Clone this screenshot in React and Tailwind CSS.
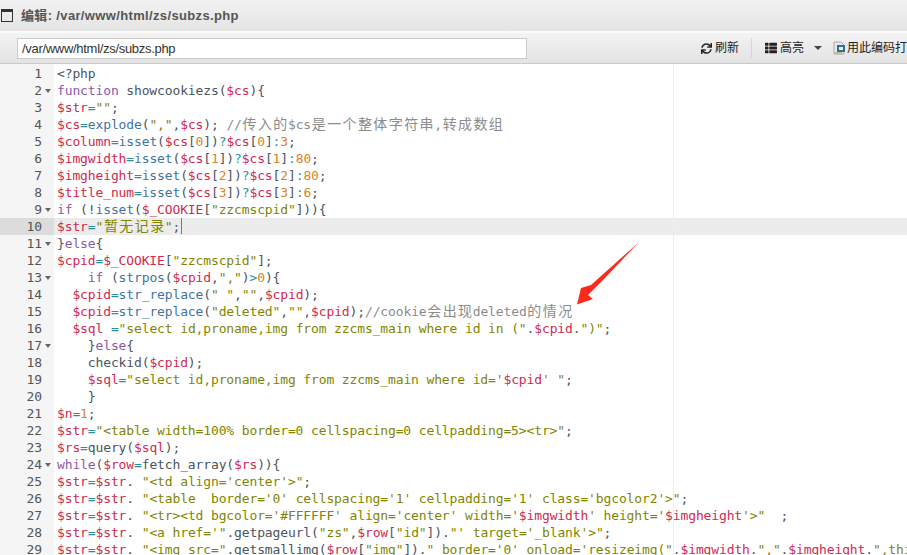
import React from 'react';
import { FaSync, FaThList } from 'react-icons/fa';

const code = [
  '<?php',
  'function showcookiezs($cs){',
  '$str="";',
  '$cs=explode(",",$cs); //传入的$cs是一个整体字符串,转成数组',
  '$column=isset($cs[0])?$cs[0]:3;',
  '$imgwidth=isset($cs[1])?$cs[1]:80;',
  '$imgheight=isset($cs[2])?$cs[2]:80;',
  '$title_num=isset($cs[3])?$cs[3]:6;',
  'if (!isset($_COOKIE["zzcmscpid"])){',
  '$str="暂无记录";',
  '}else{',
  '$cpid=$_COOKIE["zzcmscpid"];',
  '    if (strpos($cpid,",")>0){',
  '  $cpid=str_replace(" ","",$cpid);',
  '  $cpid=str_replace("deleted","",$cpid);//cookie会出现deleted的情况',
  '  $sql ="select id,proname,img from zzcms_main where id in (".$cpid.")";',
  '    }else{',
  '    checkid($cpid);',
  '    $sql="select id,proname,img from zzcms_main where id=\'$cpid\' ";',
  '    }',
  '$n=1;',
  '$str="<table width=100% border=0 cellspacing=0 cellpadding=5><tr>";',
  '$rs=query($sql);',
  'while($row=fetch_array($rs)){',
  '$str=$str. "<td align=\'center\'>";',
  '$str=$str. "<table  border=\'0\' cellspacing=\'1\' cellpadding=\'1\' class=\'bgcolor2\'>";',
  '$str=$str. "<tr><td bgcolor=\'#FFFFFF\' align=\'center\' width=\'$imgwidth\' height=\'$imgheight\'>"  ;',
  '$str=$str. "<a href=\'".getpageurl("zs",$row["id"])."\' target=\'_blank\'>";',
  '$str=$str. "<img src=".getsmallimg($row["img"])." border=\'0\' onload=\'resizeimg(".$imgwidth.",".$imgheight.",this)\'>";',
];

const folds = [2, 9, 11, 13, 17, 24];

const colors = {
  plain: 'text-[#4a5560]',
  variable: 'text-[#cf2a4f]',
  keyword: 'text-[#8a5aa8]',
  builtin: 'text-[#3f74a3]',
  string: 'text-[#7f8500]',
  number: 'text-[#d9822b]',
  operator: 'text-[#2f8f9f]',
  comment: 'text-[#8c8c8c]',
};

const tokenRe = /(\/\/.*$)|("[^"]*")|(\$\w+)|\b(function|if|else|while)\b|\b(explode|isset|str_replace|strpos)\b|(\b\d+\b)|([=><?:]+)/g;

// cjk chars take two columns in the editor
const Chars = ({ text, color }) => {
  const parts = text.split(/([\u4e00-\u9fff])/).filter(Boolean);
  return parts.map((part, i) =>
    /[\u4e00-\u9fff]/.test(part) ? (
      <span key={i} className={`inline-block w-[15.4px] text-center text-[14px] ${color}`}>{part}</span>
    ) : (
      <span key={i} className={color}>{part}</span>
    )
  );
};

const StringToken = ({ text }) =>
  text.split(/(\$\w+)/).map((part, i) =>
    part.startsWith('$') ? (
      <span key={i} className={colors.variable}>{part}</span>
    ) : (
      <Chars key={i} text={part} color={colors.string} />
    )
  );

const highlight = (line) => {
  if (line === '<?php') return <span className={colors.plain}>{line}</span>;
  const out = [];
  let last = 0;
  for (const m of line.matchAll(tokenRe)) {
    if (m.index > last) out.push(<span key={last} className={colors.plain}>{line.slice(last, m.index)}</span>);
    const k = m.index;
    if (m[1]) out.push(<Chars key={k} text={m[1]} color={colors.comment} />);
    else if (m[2]) out.push(<StringToken key={k} text={m[2]} />);
    else if (m[3]) out.push(<span key={k} className={colors.variable}>{m[3]}</span>);
    else if (m[4]) out.push(<span key={k} className={colors.keyword}>{m[4]}</span>);
    else if (m[5]) out.push(<span key={k} className={colors.builtin}>{m[5]}</span>);
    else if (m[6]) out.push(<span key={k} className={colors.number}>{m[6]}</span>);
    else out.push(<span key={k} className={colors.operator}>{m[7]}</span>);
    last = m.index + m[0].length;
  }
  if (last < line.length) out.push(<span key={last} className={colors.plain}>{line.slice(last)}</span>);
  return out;
};

const CodeRow = ({ line, n }) => {
  const active = n === 10;
  return (
    <div className={`flex h-[17px] leading-[17px] ${active ? 'bg-[#ececec]' : ''}`}>
      <div className={`flex w-[54px] shrink-0 ${active ? 'bg-[#dcdcdc]' : 'bg-[#f5f5f5]'}`}>
        <span className="w-[42px] text-right text-[#555]">{n}</span>
        {folds.includes(n) && (
          <span className="ml-[3px] mt-[7px] h-0 w-0 border-x-[3px] border-t-[4px] border-x-transparent border-t-[#666]" />
        )}
      </div>
      <div className="whitespace-pre pl-[3px]">
        {highlight(line)}
        {active && <span className="ml-px inline-block h-[16px] w-px bg-[#777] align-top" />}
      </div>
    </div>
  );
};

const FileIcon = () => (
  <svg width="13" height="14" viewBox="0 0 13 14" className="shrink-0">
    <path d="M1 1h7l3 3v9H1z" fill="#e8e8e8" stroke="#aaa" />
    <rect x="4" y="4" width="8" height="7" fill="#2f6f8f" />
    <rect x="6" y="6" width="4" height="3" fill="#dfeef5" />
    <rect x="2" y="11" width="7" height="2" fill="#c9b98a" />
  </svg>
);

export default function App() {
  return (
    <div className="relative h-[555px] w-[907px] overflow-hidden bg-white font-['Liberation_Sans','Noto_Sans_CJK_SC',sans-serif]">
      {/* Title bar */}
      <div className="flex h-[33px] items-center border-b-2 border-[#fafafa] bg-linear-to-b from-[#f2f2f2] to-[#e4e4e4] pl-px">
        <div className="h-[13px] w-[12px] border border-[#333] border-t-[3px]" />
        <span className="ml-2 text-[13px] font-bold tracking-[0.35px] text-[#555]">编辑: /var/www/html/zs/subzs.php</span>
      </div>

      {/* Toolbar */}
      <div className="flex h-[31px] items-center whitespace-nowrap border-b border-[#c9c9c9] bg-linear-to-b from-[#f3f3f3] to-[#e3e3e3] pl-[17px] text-xs text-[#222]">
        <div className="flex h-[21px] w-[510px] shrink-0 items-center border border-[#ccc] bg-white pl-[4px] pt-px text-[13px] tracking-[-0.3px] text-[#333]">
          /var/www/html/zs/subzs.php
        </div>
        <FaSync className="ml-[174px] size-[11px] shrink-0 text-[#222]" />
        <span className="ml-[3px] shrink-0">刷新</span>
        <div className="ml-[12px] h-5 w-px shrink-0 bg-[#cfd8dc]" />
        <FaThList className="ml-[13px] size-[12px] shrink-0 text-[#222]" />
        <span className="ml-[3px] shrink-0">高亮</span>
        <span className="ml-[10px] h-0 w-0 shrink-0 border-x-[4px] border-t-[4px] border-x-transparent border-t-[#444]" />
        <span className="ml-[11px] shrink-0"><FileIcon /></span>
        <span className="ml-[1px] shrink-0">用此编码打</span>
      </div>

      {/* Editor */}
      <div className="relative font-['DejaVu_Sans_Mono','Noto_Sans_CJK_SC',monospace] text-[13px] tracking-[-0.13px]">
        <div className="h-px w-[54px] bg-[#f5f5f5]" />
        {code.map((line, i) => (
          <CodeRow key={i} line={line} n={i + 1} />
        ))}
        <div className="absolute bottom-0 left-[673px] top-0 w-px bg-[#eeeeee]" />
      </div>

      {/* Red annotation arrow */}
      <svg className="absolute left-0 top-0" width="907" height="555">
        <polygon points="638.5,242.5 591,285 581,288 577,304.5 593,299 588,295 606,277" fill="#fb2a1a" />
      </svg>
    </div>
  );
}
